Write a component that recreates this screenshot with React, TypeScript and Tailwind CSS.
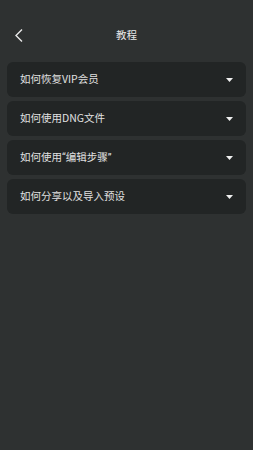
import React from "react";

const Q = ({ c }: { c: string }) => (
  <span style={{ fontFamily: 'Roboto, "Noto Sans", sans-serif' }}>{c}</span>
);

const items: React.ReactNode[] = [
  "如何恢复VIP会员",
  "如何使用DNG文件",
  <>
    如何使用<Q c="“" />编辑步骤<Q c="”" />
  </>,
  "如何分享以及导入预设",
];

export default function App() {
  return (
    <div
      className="w-[253px] h-[450px] bg-[#2e3131] text-[#e6e6e6] overflow-hidden"
      style={{ fontFamily: '"Noto Sans CJK SC", "Noto Sans", sans-serif' }}
    >
      <div className="pt-[28px] pb-[19px] px-[14px] h-[62px]">
        <div className="relative h-[15px] flex items-center justify-center">
          <svg className="absolute left-0 top-0" width="10" height="15" viewBox="0 0 10 15">
            <path d="M8 1.5 L2 7.5 L8 13.5" fill="none" stroke="#e8e8e8" strokeWidth="1.4" />
          </svg>
          <span className="text-[10.5px] leading-none text-[#e8e8e8]">教程</span>
        </div>
      </div>
      <div className="flex flex-col gap-[4px] px-[7px]">
        {items.map((t, i) => (
          <div
            key={i}
            className="h-[35px] rounded-[6px] bg-[#222525] flex items-center justify-between pl-[13px] pr-[13px]"
          >
            <span className="text-[10.5px] leading-none text-[#e0e0e0]">{t}</span>
            <svg width="7" height="4" viewBox="0 0 7 4">
              <path d="M0 0 H7 L3.5 4 Z" fill="#f0f0f0" />
            </svg>
          </div>
        ))}
      </div>
    </div>
  );
}
